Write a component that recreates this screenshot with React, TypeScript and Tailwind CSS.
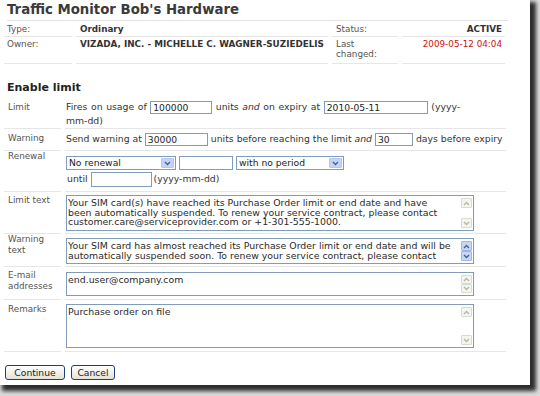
import React from "react";

function Field({ className, value, h = "h-[13px]" }: { className: string; value?: string; h?: string }) {
  return (
    <span
      className={`inline-block align-middle border border-[#7f9db9] bg-white pl-[2px] text-[9.2px] leading-[11px] text-[#222] overflow-hidden whitespace-nowrap ${h} ${className}`}
    >
      {value}
    </span>
  );
}

function Chevron({ down, color }: { down?: boolean; color: string }) {
  return (
    <svg width="7" height="5" viewBox="0 0 7 5">
      <path
        d={down ? "M1 1 L3.5 3.5 L6 1" : "M1 4 L3.5 1.5 L6 4"}
        fill="none"
        stroke={color}
        strokeWidth="1.4"
      />
    </svg>
  );
}

function Select({ className, value }: { className: string; value: string }) {
  return (
    <span
      className={`inline-flex align-middle items-stretch h-[14px] border border-[#7f9db9] bg-white text-[9.2px] leading-[12px] text-[#222] ${className}`}
    >
      <span className="flex-1 pl-[2px] whitespace-nowrap overflow-hidden">{value}</span>
      <span className="w-[13px] m-[1px] flex items-center justify-center bg-[#c3d3fb] border border-[#b4c6f0] rounded-[1px]">
        <Chevron down color="#4d6185" />
      </span>
    </span>
  );
}

function ScrollBar({ active }: { active?: boolean }) {
  const box = active
    ? "bg-[#c5d5fc] border-[#9fb5e6]"
    : "bg-[#f5f5ef] border-[#d9dbcc]";
  const col = active ? "#4d6185" : "#b5b8a8";
  return (
    <div className="w-[11px] flex flex-col justify-between py-[2px] mr-[1px]">
      <div className={`h-[10px] border rounded-[1px] flex items-center justify-center ${box}`}>
        <Chevron color={col} />
      </div>
      <div className={`h-[10px] border rounded-[1px] flex items-center justify-center ${box}`}>
        <Chevron down color={col} />
      </div>
    </div>
  );
}

function TextBox({ h, lines, active }: { h: string; lines: string[]; active?: boolean }) {
  return (
    <div className={`w-[408px] border border-[#7f9db9] bg-white flex ${h}`}>
      <div className="flex-1 pl-[1px] pt-[2px] text-[9.4px] leading-[9.5px] text-[#2a2a2a] overflow-hidden whitespace-nowrap">
        {lines.map((l, i) => (
          <div key={i}>{l}</div>
        ))}
      </div>
      <ScrollBar active={active} />
    </div>
  );
}

function Button({ className, children }: { className: string; children: React.ReactNode }) {
  return (
    <span
      className={`inline-flex items-center justify-center h-[15px] border border-[#1c3f7a] rounded-[3px] bg-gradient-to-b from-white to-[#e4e2d6] text-[9.2px] leading-[10px] text-[#1a1a1a] ${className}`}
    >
      {children}
    </span>
  );
}

const lab = "border-b border-[#e6e6e6] pl-[4px] text-[8.8px] leading-[11px] text-[#555]";
const cnt = "border-b border-[#e6e6e6] pl-[1px] text-[9.3px] text-[#333]";

export default function App() {
  return (
    <div className="w-[540px] h-[396px] overflow-hidden bg-[#dcdcdc] font-['DejaVu_Sans',sans-serif]">
      <div className="w-[530px] h-[385px] bg-white pl-[4px] shadow-[4px_4px_4px_2px_rgba(0,0,0,0.8)]">
        <div className="w-[501px] ml-[3px] h-[21px] border-b border-[#e2e2e2] pt-[1px] text-[13.3px] leading-[18px] font-bold text-[#3a3a3a]">
          Traffic Monitor Bob's Hardware
        </div>
        <div className="grid grid-cols-[68px_252px_66px_103px] gap-x-[4px] text-[8.8px] leading-[10px]">
          <div className="border-b border-[#e6e6e6] pl-[3px] pt-[3px] pb-[2px] text-[#555]">Type:</div>
          <div className="border-b border-[#e6e6e6] pl-[4px] pt-[3px] pb-[2px] font-bold text-[#333]">Ordinary</div>
          <div className="border-b border-[#e6e6e6] pl-[4px] pt-[3px] pb-[2px] text-[#555]">Status:</div>
          <div className="border-b border-[#e6e6e6] pr-[3px] pt-[3px] pb-[2px] text-right font-bold text-[#333]">ACTIVE</div>

          <div className="border-b border-[#e6e6e6] pl-[3px] pt-[2px] pb-[4px] text-[#555]">Owner:</div>
          <div className="border-b border-[#e6e6e6] pl-[4px] pt-[2px] pb-[4px] font-bold text-[#333] whitespace-nowrap">
            VIZADA, INC. - MICHELLE C. WAGNER-SUZIEDELIS
          </div>
          <div className="border-b border-[#e6e6e6] pl-[4px] pt-[2px] pb-[4px] text-[#555]">
            Last
            <br />
            changed:
          </div>
          <div className="border-b border-[#e6e6e6] pr-[3px] pt-[2px] pb-[4px] text-right text-[#cc1111]">
            2009-05-12 04:04
          </div>
        </div>

        <div className="mt-[17px] mb-[3px] pl-[3px] text-[11px] leading-[14px] font-bold text-[#222]">Enable limit</div>

        <div className="grid grid-cols-[57px_441px] gap-x-[4px]">
          <div className={`${lab} pt-[4px]`}>Limit</div>
          <div className={`${cnt} pt-[2px] leading-[14px] [word-spacing:0.6px]`}>
            Fires on usage of <Field className="w-[62px]" value="100000" /> units <i>and</i> on expiry at{" "}
            <Field className="w-[104px]" value="2010-05-11" /> (yyyy-
            <br />
            mm-dd)
          </div>

          <div className={`${lab} pt-[4px]`}>Warning</div>
          <div className={`${cnt} pt-[3px] pb-[4px] leading-[14px] whitespace-nowrap`}>
            Send warning at <Field className="w-[63px]" value="30000" /> units before reaching the limit <i>and</i>{" "}
            <Field className="w-[38px]" value="30" /> days before expiry
          </div>

          <div className={`${lab} pt-[0px]`}>Renewal</div>
          <div className={`${cnt} pt-[5px] pb-[3px]`}>
            <div className="h-[14px] leading-[14px] flex items-center gap-[3px]">
              <Select className="w-[110px]" value="No renewal" />
              <Field className="w-[54px]" h="h-[14px]" />
              <Select className="w-[108px]" value="with no period" />
            </div>
            <div className="h-[18px] leading-[18px] flex items-center">
              <span className="pl-[1px]">until</span>
              <span className="w-[3px]" />
              <Field className="w-[61px]" h="h-[15px]" />
              <span className="pl-[2px]">(yyyy-mm-dd)</span>
            </div>
          </div>

          <div className={`${lab} pt-[3px]`}>Limit text</div>
          <div className={`${cnt} pt-[3px] pb-[2px]`}>
            <TextBox
              h="h-[36px]"
              lines={[
                "Your SIM card(s) have reached its Purchase Order limit or end date and have",
                "been automatically suspended. To renew your service contract, please contact",
                "customer.care@serviceprovider.com or +1-301-555-1000.",
              ]}
            />
          </div>

          <div className={`${lab} pt-[0px]`}>
            Warning
            <br />
            text
          </div>
          <div className={`${cnt} pt-[4px] pb-[2px]`}>
            <TextBox
              active
              h="h-[26px]"
              lines={[
                "Your SIM card has almost reached its Purchase Order limit or end date and will be",
                "automatically suspended soon. To renew your service contract, please contact",
              ]}
            />
          </div>

          <div className={`${lab} pt-[3px]`}>
            E-mail
            <br />
            addresses
          </div>
          <div className={`${cnt} pt-[5px] pb-[3px]`}>
            <TextBox h="h-[24px]" lines={["end.user@company.com"]} />
          </div>

          <div className={`${lab} pt-[4px]`}>Remarks</div>
          <div className={`${cnt} pt-[4px] pb-[3px]`}>
            <TextBox h="h-[44px]" lines={["Purchase order on file"]} />
          </div>
        </div>

        <div className="mt-[13px] flex gap-[6px] ml-[1px]">
          <Button className="w-[60px]">Continue</Button>
          <Button className="w-[44px]">Cancel</Button>
        </div>
      </div>
    </div>
  );
}
